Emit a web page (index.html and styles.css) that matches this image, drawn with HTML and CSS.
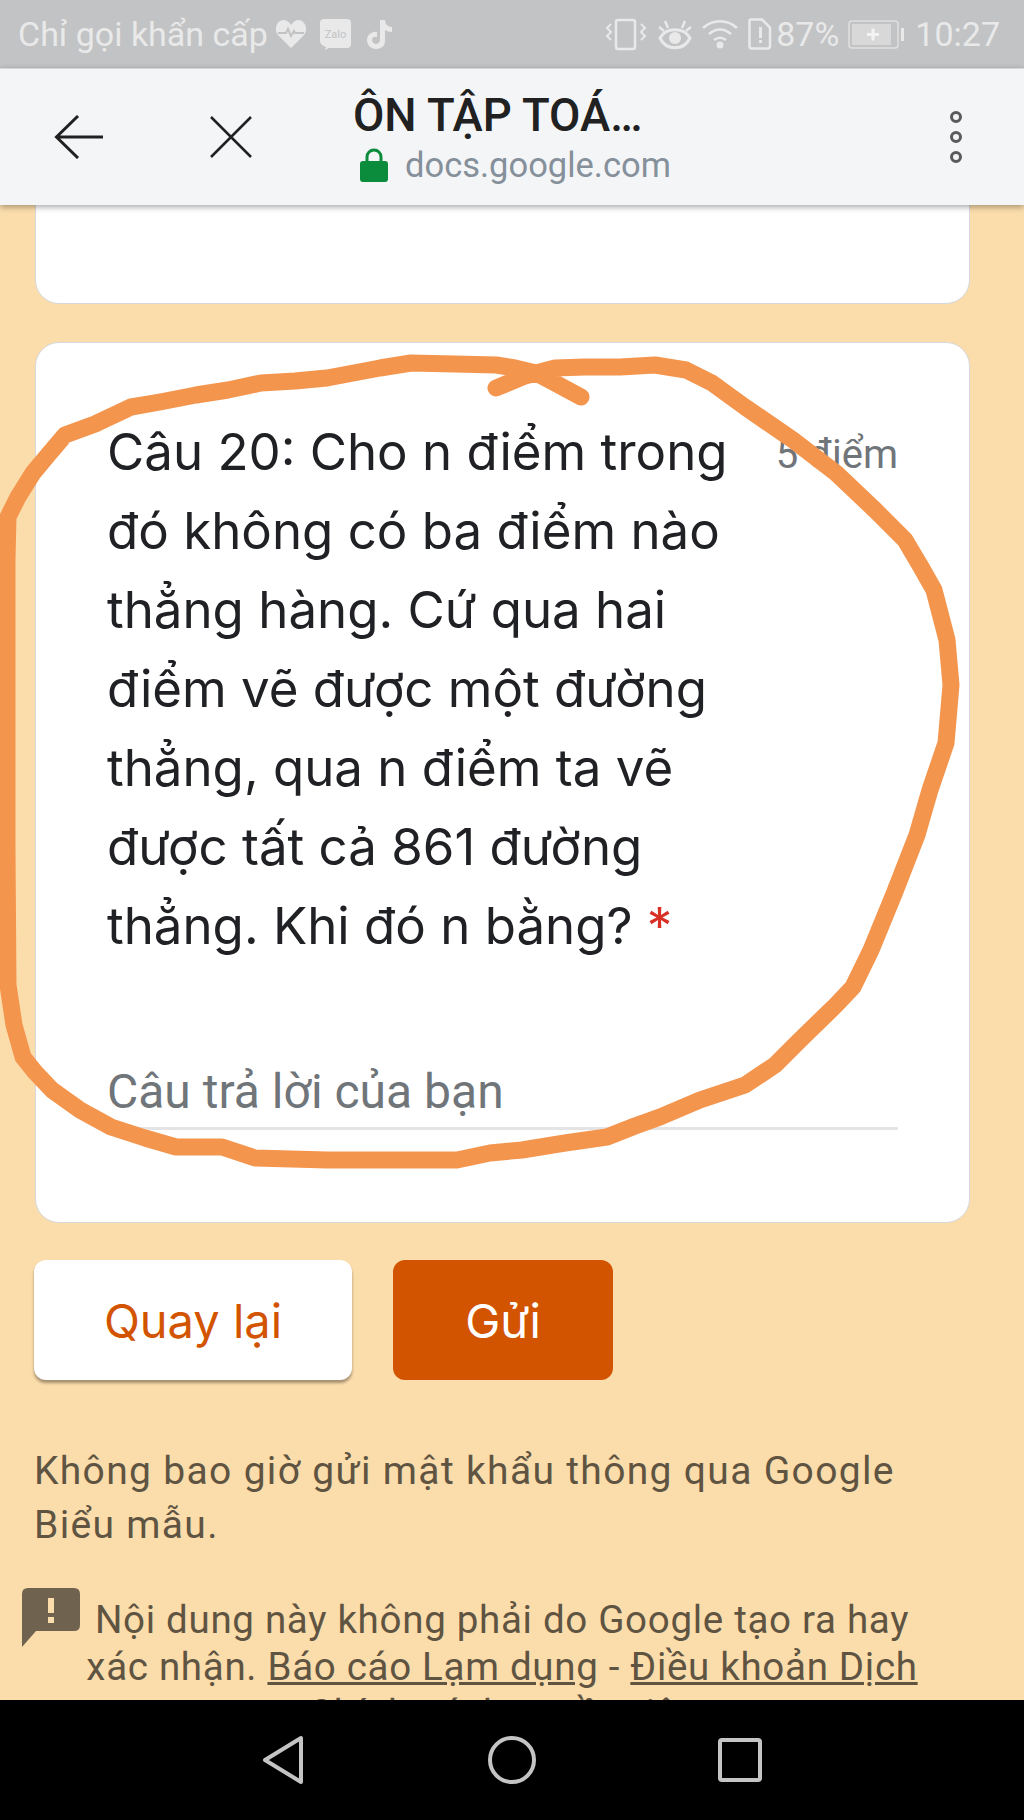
FILE: index.html
```html
<!DOCTYPE html>
<html lang="vi">
<head>
    <meta charset="UTF-8">
    <meta name="viewport" content="width=device-width, initial-scale=1.0">
    <title>ÔN TẬP TOÁN</title>
    <link rel="stylesheet" href="styles.css">
</head>
<body>
<div class="page">

    <!-- Android status bar -->
    <div class="status-bar">
        <div class="status-left">
            <span class="carrier">Chỉ gọi khẩn cấp</span>
            <svg class="st-icon" width="32" height="30" viewBox="0 0 32 30">
                <path d="M16 29 3 16C-1 11 1 2 8 1c4 0 6 2 8 5 2-3 4-5 8-5 7 1 9 10 5 15z" fill="#e9e9e9"/>
                <path d="M3 14h8l2-4 3 7 3-5 1 2h9" fill="none" stroke="#c2c3c5" stroke-width="2"/>
            </svg>
            <svg class="st-icon zalo" width="33" height="33" viewBox="0 0 33 33">
                <path d="M5 1h23q4 0 4 4v21q0 4-4 4H10l-4 2 1-3q-6-2-6-6V5q0-4 4-4z" fill="#e9e9e9"/>
                <text x="16.5" y="20" text-anchor="middle" class="zalo-text">Zalo</text>
            </svg>
            <svg class="st-icon tiktok" width="27" height="31" viewBox="0 0 27 31">
                <path d="M14 1h5c0 4 3 7 7 7v5c-3 0-5-1-7-2v11c0 5-4 8-9 8-5 0-9-4-9-9s5-9 10-8v5c-3-1-5 1-5 3 0 2 2 4 4 4s4-2 4-4z" fill="#e9e9e9"/>
            </svg>
        </div>
        <div class="status-right">
            <svg class="st-icon" width="42" height="33" viewBox="0 0 42 33">
                <rect x="11" y="2" width="19" height="29" rx="2" fill="none" stroke="#e9e9e9" stroke-width="2.5"/>
                <path d="M6 6 2 10l4 4-4 4 4 4M36 6l4 4-4 4 4 4-4 4" fill="none" stroke="#e9e9e9" stroke-width="2"/>
            </svg>
            <svg class="st-icon eye" width="34" height="31" viewBox="0 0 34 31">
                <path d="M2 19C8 8 26 8 32 19 26 32 8 32 2 19z" fill="none" stroke="#e9e9e9" stroke-width="3"/>
                <circle cx="17" cy="19" r="6" fill="#e9e9e9"/>
                <path d="M7 2l3 7M27 2l-3 7M1 8l5 4M33 8l-5 4" stroke="#e9e9e9" stroke-width="2.5"/>
            </svg>
            <svg class="st-icon wifi" width="36" height="30" viewBox="0 0 36 30">
                <path d="M1 9c10-9 24-9 34 0M7 15c7-6 15-6 22 0M12 21c4-3 8-3 12 0" fill="none" stroke="#e9e9e9" stroke-width="2.6"/>
                <circle cx="18" cy="26" r="3.5" fill="#e9e9e9"/>
            </svg>
            <svg class="st-icon sim" width="24" height="32" viewBox="0 0 24 32">
                <path d="M3 1.500h11l8 8V28q0 2.500-2.500 2.500h-16Q1.500 30.500 1.500 28V3q0-1.500 1.500-1.500z" fill="none" stroke="#e9e9e9" stroke-width="2.5"/>
                <path d="M11 9h3v11h-3zM11 22h3v3h-3z" fill="#e9e9e9"/>
            </svg>
            <span class="percent">87%</span>
            <svg class="st-icon battery" width="58" height="29" viewBox="0 0 58 29">
                <rect x="1" y="1" width="49" height="27" rx="3" fill="none" stroke="#e0e0e0" stroke-width="1.500"/>
                <rect x="4" y="4" width="39" height="21" fill="#d8d8d8"/>
                <path d="M19 14.500h12M25 8.500v12" stroke="#f4f4f4" stroke-width="3"/>
                <rect x="53" y="8" width="3" height="13" fill="#e9e9e9"/>
            </svg>
            <span class="clock">10:27</span>
        </div>
    </div>

    <!-- Custom tab toolbar -->
    <header class="toolbar">
        <svg class="tb-back" width="50" height="44" viewBox="0 0 50 44">
            <path d="M49 22H3M24 1 2.500 22 24 43" fill="none" stroke="#212121" stroke-width="3"/>
        </svg>
        <svg class="tb-close" width="44" height="44" viewBox="0 0 44 44">
            <path d="M2 2l40 40M42 2 2 42" fill="none" stroke="#212121" stroke-width="2.500"/>
        </svg>
        <div class="tb-title">
            <div class="tb-name">ÔN TẬP TOÁ…</div>
            <div class="tb-url">
                <svg width="28" height="35" viewBox="0 0 28 35">
                    <path d="M7 16V10a7 7 0 0 1 14 0v6" fill="none" stroke="#0b8b3c" stroke-width="3"/>
                    <rect y="14" width="28" height="21" rx="3" fill="#0b8b3c"/>
                </svg>
                <span>docs.google.com</span>
            </div>
        </div>
        <svg class="tb-menu" width="14" height="54" viewBox="0 0 14 54">
            <circle cx="7" cy="7" r="4.500" fill="none" stroke="#5a5a5a" stroke-width="3"/>
            <circle cx="7" cy="27" r="4.500" fill="none" stroke="#5a5a5a" stroke-width="3"/>
            <circle cx="7" cy="47" r="4.500" fill="none" stroke="#5a5a5a" stroke-width="3"/>
        </svg>
    </header>

    <main class="content">
        <div class="card card-prev"></div>

        <section class="card card-question">
            <div class="question-head">
                <div class="question-text">Câu 20: Cho n điểm trong đó không có ba điểm nào thẳng hàng. Cứ qua hai điểm vẽ được một đường thẳng, qua n điểm ta vẽ được tất cả 861 đường thẳng. Khi đó n bằng? <span class="required">*</span></div>
                <div class="points">5 điểm</div>
            </div>
            <div class="answer">Câu trả lời của bạn</div>
        </section>

        <div class="buttons">
            <button class="btn btn-back">Quay lại</button>
            <button class="btn btn-send">Gửi</button>
        </div>

        <p class="password-note">Không bao giờ gửi mật khẩu thông qua Google Biểu mẫu.</p>

        <div class="disclaimer">
            <svg class="warn" width="58" height="59" viewBox="0 0 58 59">
                <path d="M6 0h46q6 0 6 6v31q0 6-6 6H14L0 59V6q0-6 6-6z" fill="#6f6350"/>
                <path d="M26 10h6v15h-6zM26 29h6v6h-6z" fill="#fbdcab"/>
            </svg>
            <p class="disclaimer-text">Nội dung này không phải do Google tạo ra hay xác nhận. <a>Báo cáo Lạm dụng</a> - <a>Điều khoản Dịch vụ</a> - <a>Chính sách quyền riêng tư</a></p>
        </div>
    </main>

    <!-- Android nav bar -->
    <nav class="nav-bar">
        <svg width="44" height="50" viewBox="0 0 44 50">
            <path d="M39 3v44L3 25z" fill="none" stroke="#c4c4c4" stroke-width="4" stroke-linejoin="round"/>
        </svg>
        <svg width="50" height="50" viewBox="0 0 50 50">
            <circle cx="25" cy="25" r="22" fill="none" stroke="#c4c4c4" stroke-width="4"/>
        </svg>
        <svg width="44" height="44" viewBox="0 0 44 44">
            <rect x="2" y="2" width="40" height="40" rx="2" fill="none" stroke="#c4c4c4" stroke-width="4"/>
        </svg>
    </nav>

    <!-- Hand drawn circle on top of the screenshot -->
    <svg class="scribble" width="1024" height="1820" viewBox="0 0 1024 1820">
        <path d="M581 397 555 383 536 373 515 368 496 365 455 364 411 363 380 368 327 378 295 381 261 383 228 390 196 395 160 402 131 407 95 424 65 435 48 455 33 473 18 497 8 517 7 560 7 700 7 850 8 985 14 1025 23 1057 35 1072 52 1090 80 1110 111 1127 145 1138 176 1147 222 1147 255 1158 327 1160 400 1160 457 1160 490 1153 522 1150 565 1143 607 1137 635 1126 660 1117 700 1100 745 1085 775 1065 800 1040 836 1005 853 987 871 950 894 894 917 835 930 790 946 743 951 685 947 640 934 590 921 567 905 540 875 510 836 473 793 440 745 407 712 383 686 370 655 365 620 367 585 367 555 368 525 376 496 388" fill="none" stroke="#f4954e" stroke-width="17" stroke-linecap="round" stroke-linejoin="round"/>
    </svg>

</div>
</body>
</html>
```

FILE: styles.css
```css
* {
    box-sizing: border-box;
}

html, body {
    margin: 0;
    padding: 0;
}

.page {
    position: relative;
    width: 1024px;
    height: 1820px;
    overflow: hidden;
    display: flex;
    flex-direction: column;
    background-color: #fbdcab;
    font-family: "Roboto", sans-serif;
}

/* status bar */
.status-bar {
    height: 68px;
    flex: none;
    display: flex;
    justify-content: space-between;
    align-items: center;
    padding: 0 24px 0 18px;
    background-color: #c2c3c5;
    color: #e9e9e9;
    font-size: 34px;
}

.status-left, .status-right {
    display: flex;
    align-items: center;
}

.st-icon {
    flex: none;
}

.status-left .st-icon {
    margin-left: 7px;
}

.status-left .zalo {
    margin-left: 12px;
}

.status-left .tiktok {
    margin-left: 14px;
}

.zalo-text {
    font-family: "Roboto", sans-serif;
    font-size: 11px;
    fill: #c2c3c5;
}

.status-right .eye {
    margin-left: 11px;
}

.status-right .wifi {
    margin-left: 10px;
}

.status-right .sim {
    margin-left: 10px;
}

.percent {
    margin-left: 4px;
}

.battery {
    margin-left: 9px;
}

.clock {
    margin-left: 9px;
}

/* toolbar */
.toolbar {
    position: relative;
    z-index: 2;
    height: 137px;
    flex: none;
    display: flex;
    align-items: center;
    padding-left: 54px;
    background-color: #f4f5f7;
    border-top: 1px solid #d4d5d7;
    box-shadow: 0 2px 6px rgba(0, 0, 0, 0.35);
}

.tb-close {
    margin-left: 105px;
}

.tb-title {
    margin-left: 100px;
    flex: 1;
}

.tb-name {
    font-size: 45.5px;
    line-height: 50px;
    margin-bottom: 5px;
    font-weight: 500;
    color: #212121;
}

.tb-url {
    display: flex;
    align-items: center;
    gap: 17px;
    margin-left: 7px;
    font-size: 34.5px;
    line-height: 38px;
    color: #85909b;
}

.tb-menu {
    margin-right: 61px;
}

/* page content */
.content {
    flex: 1;
    min-height: 0;
    overflow: hidden;
    padding: 0 54px 0 34px;
}

.card {
    background-color: #ffffff;
    border: 1px solid #d5d8de;
    border-radius: 24px;
}

.card-prev {
    height: 140px;
    margin-top: -41px;
    margin-left: 1px;
}

.card-question {
    height: 881px;
    margin-top: 38px;
    margin-left: 1px;
    padding: 69px 71px 0;
}

.question-head {
    display: flex;
    justify-content: space-between;
    height: 601px;
}

.question-text {
    width: 640px;
    font-family: "Inter", sans-serif;
    font-size: 51px;
    line-height: 79px;
    color: #202124;
}

.required {
    color: #d93025;
}

.points {
    margin-top: 18px;
    font-size: 40px;
    line-height: 50px;
    color: #70757a;
}

.answer {
    height: 117px;
    padding-top: 49px;
    border-bottom: 3px solid #e4e4e6;
    font-size: 48px;
    line-height: 60px;
    color: #70757a;
}

.buttons {
    display: flex;
    gap: 41px;
    margin-top: 37px;
}

.btn {
    height: 120px;
    border: none;
    border-radius: 12px;
    font-family: "Inter", sans-serif;
    font-size: 47px;
    padding: 0;
}

.btn-back {
    width: 318px;
    background-color: #ffffff;
    color: #d35400;
    box-shadow: 0 3px 3px rgba(0, 0, 0, 0.35);
}

.btn-send {
    width: 220px;
    background-color: #d35400;
    color: #ffffff;
}

.password-note {
    margin: 64px 0 0;
    font-size: 39px;
    line-height: 54px;
    letter-spacing: 1.33px;
    color: #5f5442;
}

.disclaimer {
    display: flex;
    margin: 36px 46px 0 -12px;
    color: #5f5442;
}

.warn {
    flex: none;
}

.disclaimer-text {
    flex: 1;
    margin: 8px 0 0;
    text-align: center;
    font-size: 38.5px;
    line-height: 47px;
    letter-spacing: 0.7px;
}

.disclaimer-text a {
    text-decoration: underline;
}

/* nav bar */
.nav-bar {
    position: relative;
    z-index: 2;
    height: 120px;
    flex: none;
    display: flex;
    justify-content: space-between;
    align-items: center;
    padding: 0 262px;
    background-color: #000000;
}

.scribble {
    position: absolute;
    top: 0;
    left: 0;
    z-index: 3;
    pointer-events: none;
}
```
